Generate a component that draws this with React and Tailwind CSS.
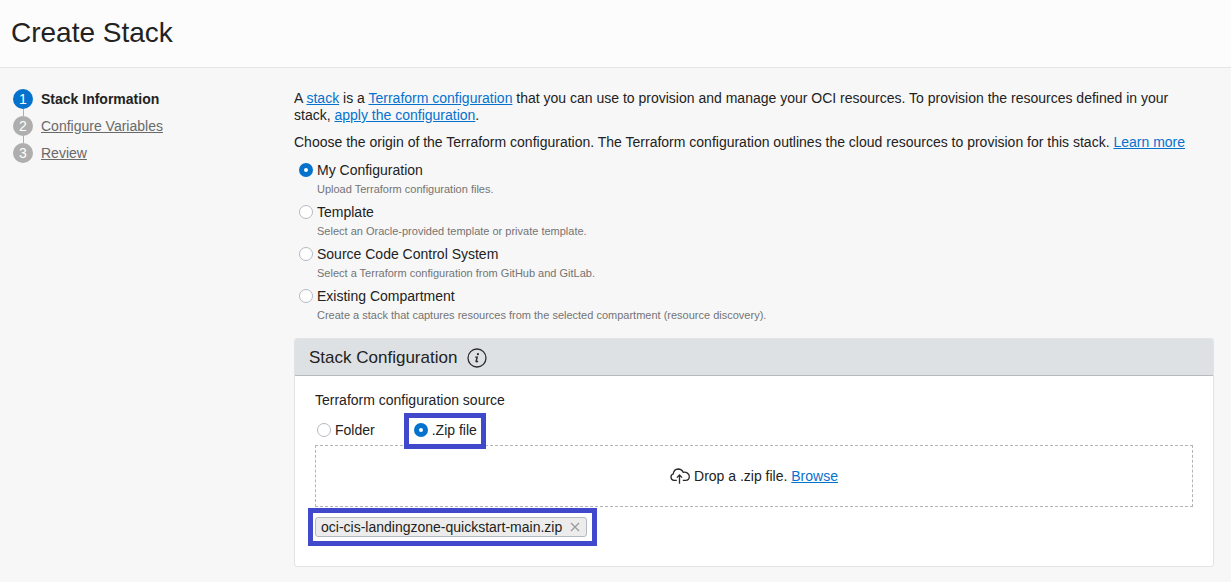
import { useState } from "react";

const steps = ["Stack Information", "Configure Variables", "Review"];

const origins = [
  ["My Configuration", "Upload Terraform configuration files."],
  ["Template", "Select an Oracle-provided template or private template."],
  ["Source Code Control System", "Select a Terraform configuration from GitHub and GitLab."],
  ["Existing Compartment", "Create a stack that captures resources from the selected compartment (resource discovery)."],
];

const radio =
  "m-0 size-3.5 shrink-0 appearance-none rounded-full border border-[#b4bac3] bg-white checked:border-5 checked:border-[#0572ce]";
const link = "text-[#0572ce] underline";

function Highlight({ className }) {
  return (
    <span
      aria-hidden="true"
      className={"pointer-events-none absolute border-5 border-[#4048cb] " + className}
    />
  );
}

function Steps() {
  return (
    <nav aria-label="Steps" className="w-[281px] shrink-0 pt-px">
      <ol>
        {steps.map((name, i) => (
          <li key={name}>
            {i > 0 && <div className="ml-[10px] h-[7px] w-px bg-[#aeaeae]" />}
            <div className="flex h-5 items-center gap-2">
              <span
                className={
                  "flex size-5 items-center justify-center rounded-full text-[14px] leading-5 text-white " +
                  (i === 0 ? "bg-[#0572ce]" : "bg-[#aeaeae]")
                }
              >
                {i + 1}
              </span>
              {i === 0 ? (
                <strong aria-current="step" className="font-bold">{name}</strong>
              ) : (
                <a href="#" className="text-[#696969] underline">{name}</a>
              )}
            </div>
          </li>
        ))}
      </ol>
    </nav>
  );
}

export default function App() {
  const [origin, setOrigin] = useState(0);
  const [source, setSource] = useState("zip");
  const [file, setFile] = useState("oci-cis-landingzone-quickstart-main.zip");

  return (
    <div className="min-h-screen bg-[#f7f7f7] font-['Liberation_Sans',Arial,sans-serif] text-[14px] leading-[17px] text-[#222]">
      <header className="border-b border-[#e4e5e6] bg-[#fcfcfc] px-[11px] pt-[17px] pb-[18px]">
        <h1 className="text-[28px] leading-8">Create Stack</h1>
      </header>

      <div className="flex pt-[20px] pr-[17px] pb-[15px] pl-[13px]">
        <Steps />
        <main className="min-w-0 flex-1 pt-[2px]">
          <p className="pr-5">
            A <a href="#" className={link}>stack</a> is a{" "}
            <a href="#" className={link}>Terraform configuration</a> that you can use to provision and
            manage your OCI resources. To provision the resources defined in your stack,{" "}
            <a href="#" className={link}>apply the configuration</a>.
          </p>
          <p className="mt-[10px]">
            Choose the origin of the Terraform configuration. The Terraform configuration outlines the
            cloud resources to provision for this stack. <a href="#" className={link}>Learn more</a>
          </p>

          <div role="radiogroup" aria-label="Origin of the Terraform configuration" className="mt-[9px] pl-[5px]">
            {origins.map(([name, description], i) => (
              <div key={name} className="h-[42px]">
                <label className="flex h-5 w-fit items-center gap-1">
                  <input
                    type="radio"
                    name="origin"
                    className={radio}
                    checked={origin === i}
                    onChange={() => setOrigin(i)}
                    aria-describedby={"origin-" + i}
                  />
                  {name}
                </label>
                <p id={"origin-" + i} className="pl-[18px] text-[11px] leading-[18px] text-[#747474]">
                  {description}
                </p>
              </div>
            ))}
          </div>

          <section className="mt-[10px] rounded-[3px] border border-[#e1e3e5] bg-white">
            <div className="flex items-center gap-[10px] rounded-t-[2px] border-b border-[#b4bac0] bg-[#dde1e4] px-[14px] pt-[9px] pb-[7px]">
              <h2 className="text-[17px] leading-5">Stack Configuration</h2>
              <button type="button" aria-label="About stack configuration">
                <svg viewBox="0 0 20 20" className="block size-5" fill="none" stroke="#2b2b2b">
                  <circle cx="10" cy="10" r="9" strokeWidth="1.3" />
                  <circle cx="10.9" cy="6.2" r="1.1" fill="#2b2b2b" stroke="none" />
                  <path d="M8.2 9.1h2l-1.1 4.1c-.2.9.7.9 1.9-.2" strokeWidth="1.4" />
                </svg>
              </button>
            </div>

            <div className="px-5 pt-4 pb-[29px]">
              <fieldset>
                <legend>Terraform configuration source</legend>
                <div className="flex gap-[39px] pt-[11px] pb-[5px] pl-[2px]">
                  <label className="flex h-5 items-center gap-1">
                    <input
                      type="radio"
                      name="source"
                      className={radio}
                      checked={source === "folder"}
                      onChange={() => setSource("folder")}
                    />
                    Folder
                  </label>
                  <label className="relative flex h-5 items-center gap-1">
                    <input
                      type="radio"
                      name="source"
                      className={radio}
                      checked={source === "zip"}
                      onChange={() => setSource("zip")}
                    />
                    .Zip file
                    <Highlight className="-right-[9px] -left-[10px] -top-[7px] -bottom-[9px]" />
                  </label>
                </div>
              </fieldset>

              <div className="flex h-[62px] items-center justify-center gap-1 border border-dashed border-[#b0b5ba]">
                <svg viewBox="0 0 20 16" className="h-4 w-5" fill="none" stroke="#2b2b2b" strokeWidth="1.3">
                  <path d="M6.8 12.4H4a3.4 3.4 0 0 1-.7-6.6A5.3 5.3 0 0 1 8.2 1c2.4 0 4.1 1.2 5 3.3 3.3-.5 6.1 1.3 6.1 4.3 0 2.3-1.5 3.800-3.600 3.800h-2.900" />
                  <path d="M9.500 15.700V7.200M6.900 9.600l2.600-2.600 2.600 2.600" />
                </svg>
                <p>
                  Drop a .zip file. <a href="#" className={link}>Browse</a>
                </p>
              </div>

              <div className="mt-[10px] h-5">
                {file && (
                  <div className="relative flex h-5 w-fit items-center gap-2 rounded-[3px] border border-[#b4bac3] bg-[#ececec] px-[5px]">
                    {file}
                    <button type="button" aria-label={"Remove " + file} onClick={() => setFile("")} className="pr-px">
                      <svg viewBox="0 0 10 10" className="block size-[10px]" stroke="#999" strokeWidth="1.2">
                        <path d="M1 1l8 8M9 1L1 9" />
                      </svg>
                    </button>
                    <Highlight className="-right-[11px] -left-2 -inset-y-[10px]" />
                  </div>
                )}
              </div>
            </div>
          </section>
        </main>
      </div>
    </div>
  );
}
